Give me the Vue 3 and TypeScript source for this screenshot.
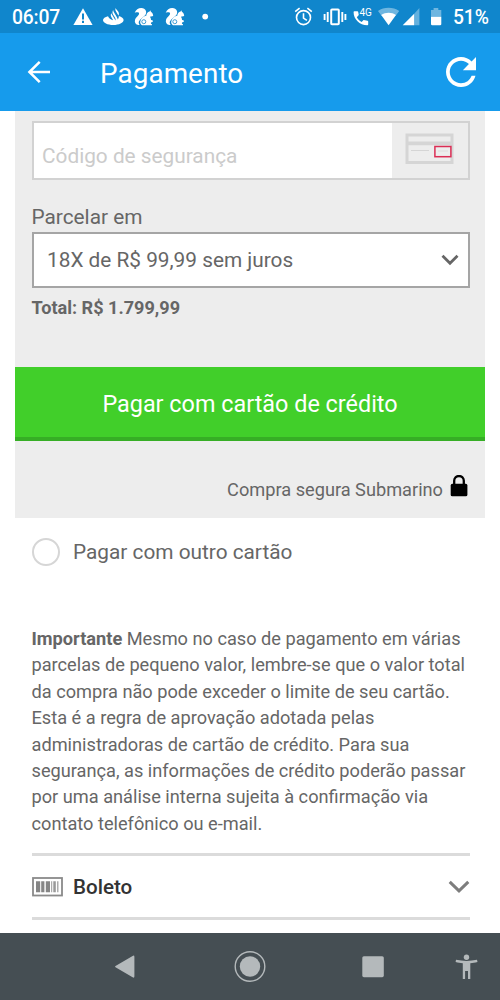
<script setup lang="ts">
import { ref } from 'vue'

const securityCode = ref('')
const installment = '18X de R$ 99,99 sem juros'
const total = 'Total: R$ 1.799,99'
const notice: string[] = [
  'Mesmo no caso de pagamento em várias',
  'parcelas de pequeno valor, lembre-se que o valor total',
  'da compra não pode exceder o limite de seu cartão.',
  'Esta é a regra de aprovação adotada pelas',
  'administradoras de cartão de crédito. Para sua',
  'segurança, as informações de crédito poderão passar',
  'por uma análise interna sujeita à confirmação via',
  'contato telefônico ou e-mail.',
]
</script>

<template>
  <div class="screen">
    <div class="status">
      <span class="clock">06:07</span>
      <svg class="status-icons" width="140" height="33" viewBox="72 0 140 33" fill="#fff">
        <path d="M83 8.2 92.6 25H73.4Z" />
        <path d="M82 13.4h2v6h-2zM82 20.8h2v2.1h-2z" fill="#1086cc" />
        <path d="M108 16.2c-3 .8-5 2.2-5 3.9 0 2.8 4.6 5 10.3 5s10.3-2.2 10.3-5c0-1.8-1.9-3.3-4.8-4.1.1 1.4-.3 2.6-1.1 3.5-.2-1.3-.7-2-1.500-3.4l-2.4-4.1c-.4-.7-.6-1.4-.6-2.1-.9 1.3-.9 3.1-.1 4.500l2 3.4c.5.9.6 1.6.4 2.7l-4.3-7.2c-.6 1.3-.6 2.500.1 3.7l1.800 3.2c-1.900-.4-3.800-1.400-5.100-4z" />
        <path d="M115.7 8c-.5 1.2-.4 2.2.2 3.3l2.6 4.500c.7-1.500.5-2.900-.3-4.200l-1.900-2.300c-.3-.4-.5-.8-.6-1.300z" />
        <g v-for="x in [0, 31]" :key="x" :transform="`translate(${x} 0)`">
          <path d="M134.700 12.700c1.200-3.200 3.700-4.800 6.700-4.700 4.300.2 6 4 3.900 7.100-1.600 2.300-5 3.600-6.300 6.200-.6 1.400-.2 2.600.8 3.800h-1.300c-2.900-.5-4.200-2.700-3.500-5.200.7-2.400 4.100-4.100 4.100-6.300 0-1.400-1.900-1.500-4.400-.9z" />
          <path d="M140.300 21.200c.5-2.800 3.500-4.700 6.100-5.600-.2-2.200 1.200-3.900 3.200-4.200l.7-1.100.6 1.500c1.300.7 2.100 2 2.300 4.200l-3.300.8c.7.9 1.200 1.900 1.100 3.200l1.600.2.200 1.700-1.600.3c0 .7-.1 1.300-.4 1.900h1.100v1.200H142c-1.400-1-2.100-2.500-1.700-4.100z" />
          <circle cx="143.800" cy="21.700" r="2" fill="none" stroke="#1086cc" stroke-width=".8" />
        </g>
        <circle cx="205.2" cy="16.600" r="2.900" />
      </svg>
      <svg class="system-icons" width="154" height="33" viewBox="290 0 154 33" fill="#fff">
        <g fill="none" stroke="#fff" stroke-width="1.6">
          <circle cx="303.5" cy="17.6" r="7" />
          <path d="M303.5 13.3v4.8l3.4 2.2M295.2 11.7l4.4-3.5M311.8 11.7l-4.4-3.5" />
          <rect x="331.2" y="9.5" width="7.6" height="14.8" rx=".8" stroke-width="2" />
          <path d="M327.7 12v10M342.3 12v10M324.6 14v6M345.4 14v6" stroke-width="1.9" />
        </g>
        <path d="M354.4 11.2h3c.5 0 .7.3.8.7l.6 3.2-2 2.2c1.3 2.3 2.5 3.4 4.8 4.6l2-2 3.9.8c.4.1.7.4.7.8v3c0 .5-.3.8-.8.8-8-.2-13.8-6-13.8-13.3 0-.5.3-.8.8-.8z" />
        <path d="M378 11c6-4.2 15-4.2 21.2 0l-3.5 4.7c-4.2-2.5-9.9-2.5-14.2 0z" opacity=".4" />
        <path d="M381.2 14.9c4.5-3 10.3-3 14.8 0l-7.4 10.3z" />
        <path d="M419.4 8v17.2h-5.2V13.7z" opacity=".35" />
        <path d="M414.2 13.7v11.5h-11.5z" />
        <path d="M433.6 8h4.7v2h3v6.8H431V10h2.6z" opacity=".4" />
        <path d="M431 16.8h10.3v7.1q0 1.3-1.3 1.3h-7.7q-1.3 0-1.3-1.3z" />
      </svg>
      <span class="network">4G</span>
      <span class="battery">51%</span>
    </div>

    <header class="appbar">
      <svg class="back" width="24" height="24" viewBox="0 0 24 24" fill="none" stroke="#fff" stroke-width="2.5">
        <path d="M23 12H2.5M12.7 1.8 2.4 12l10.300 10.200" />
      </svg>
      <h1>Pagamento</h1>
      <svg class="reload" width="30" height="30" viewBox="4 4 16 16" fill="#fff">
        <path d="M17.65 6.35C16.2 4.9 14.21 4 12 4c-4.42 0-7.99 3.58-7.99 8s3.57 8 7.99 8c3.73 0 6.84-2.55 7.73-6h-2.08c-.82 2.33-3.04 4-5.65 4-3.31 0-6-2.69-6-6s2.69-6 6-6c1.66 0 3.14.69 4.22 1.78L13 11h7V4z" />
      </svg>
    </header>

    <main class="content">
      <section class="panel">
        <div class="code-field">
          <input v-model="securityCode" type="text" placeholder="Código de segurança" />
          <div class="code-hint">
            <svg width="50" height="32" viewBox="0 0 50 32" fill="none">
              <rect x="2" y="2" width="45" height="27.5" stroke="#d5d5d5" stroke-width="3" />
              <path d="M2 10.300h45" stroke="#d5d5d5" stroke-width="3.8" />
              <path d="M6 17.5h18" stroke="#d5d5d5" />
              <rect x="29.9" y="13.5" width="16" height="10.2" fill="#ededed" stroke="#db2e55" stroke-width="1.5" />
              <path d="M33 18h10" stroke="#ddd" />
            </svg>
          </div>
        </div>
        <div class="label">Parcelar em</div>
        <div class="select">
          <span>{{ installment }}</span>
          <svg width="18" height="12" viewBox="0 0 18 12" fill="none" stroke="#666" stroke-width="2.8">
            <path d="m1.5 1.7 7.5 7.5 7.5-7.5" />
          </svg>
        </div>
        <div class="total">{{ total }}</div>
        <button class="pay" type="button"><span>Pagar com cartão de crédito</span></button>
        <div class="secure">
          <span>Compra segura Submarino</span>
          <svg width="18" height="22" viewBox="0 0 18 22">
            <path d="M4.2 10V5.8a4.8 4.8 0 0 1 9.6 0V10" fill="none" stroke="#000" stroke-width="2.3" />
            <rect x=".7" y="8.8" width="16.7" height="12.5" rx="1.6" />
          </svg>
        </div>
      </section>

      <div class="other">
        <i class="radio"></i>
        <span>Pagar com outro cartão</span>
      </div>

      <p class="notice">
        <span v-for="(line, i) in notice" :key="i" class="line"><b v-if="i === 0">Importante</b>{{ i === 0 ? ' ' : '' }}{{ line }}</span>
      </p>

      <div class="boleto">
        <svg width="31" height="20" viewBox="0 0 31 20">
          <rect x="1" y="1" width="29" height="17.5" fill="none" stroke="#8a8a8a" stroke-width="1.8" />
          <path d="M4 4.300h4.200v11H4zM9.200 4.300h3.200v11H9.200zM13.800 4.300H18v11h-4.200z" fill="#858585" />
          <path d="M19.200 4.300h1v11h-1zM21.300 4.300h2.500v11h-2.500zM25.200 4.300h1.200v11h-1.200z" fill="#999" />
        </svg>
        <span>Boleto</span>
        <svg class="expand" width="22" height="14" viewBox="0 0 22 14" fill="none" stroke="#7d7d7d" stroke-width="3">
          <path d="m1.7 1.8 9.300 9 9.300-9" />
        </svg>
      </div>
    </main>

    <nav class="navbar">
      <svg width="500" height="67" viewBox="0 0 500 67" fill="#b4b9bb">
        <path d="M115.5 33.1 132.6 22.900q1.800-1 1.800 1v19.400q0 2-1.800 1l-17.100-10q-1-.6 0-1.200z" />
        <circle cx="250" cy="33.5" r="14.8" fill="none" stroke="#b4b9bb" stroke-width="1.4" />
        <circle cx="250" cy="33.5" r="10.2" />
        <rect x="362.3" y="23.2" width="21.5" height="21" rx="1.6" />
        <circle cx="466.5" cy="24.2" r="2.7" />
        <path d="M456 26.800c7 1.500 14 1.500 21 0l.5 2.200c-2.600.6-4.500 1-7.200 1.200v15.900h-2.300v-8h-2.900v8h-2.300V30.200c-2.700-.2-4.600-.6-7.200-1.200z" />
      </svg>
    </nav>
  </div>
</template>

<style>
body {
  margin: 0;
  background: #fff;
}
</style>

<style scoped>
* {
  box-sizing: border-box;
}

.screen {
  display: flex;
  flex-direction: column;
  width: 500px;
  height: 1000px;
  overflow: hidden;
  background: #fff;
  color: #666;
  font-family: Roboto, sans-serif;
}

span {
  white-space: nowrap;
}

svg {
  display: block;
  flex: none;
}

.status {
  position: relative;
  display: flex;
  align-items: center;
  height: 33px;
  padding: 2px 11px 0 12px;
  background: #1086cc;
  color: #fff;
  font-size: 19.3px;
  font-weight: 500;
}

.status svg {
  margin-top: -2px;
}

.clock {
  width: 60px;
  letter-spacing: -0.15px;
}

.status .system-icons {
  margin-left: 78px;
}

.network {
  position: absolute;
  left: 359.5px;
  top: 7px;
  font-size: 10px;
  line-height: 12px;
  font-weight: 400;
}

.battery {
  margin-left: auto;
}

.appbar {
  display: flex;
  align-items: center;
  height: 78px;
  padding: 0 24px 0 27px;
  background: #169bec;
  color: #fff;
}

h1 {
  margin: 3px 0 0 49px;
  font-size: 27.8px;
  line-height: 34px;
  font-weight: 400;
  letter-spacing: 0.1px;
}

.reload {
  margin-left: auto;
}

.content {
  height: 822px;
}

.panel {
  height: 407px;
  margin: 0 15px;
  padding-top: 10px;
  background: #ededed;
}

.code-field,
.select {
  display: flex;
  width: 438px;
  margin-left: 17px;
  background: #fff;
}

.code-field {
  height: 59px;
  border: 2px solid #d2d2d2;
}

input {
  width: 358px;
  padding: 10px 0 0 8px;
  border: 0;
  outline: 0;
  background: #fff;
  font: 20.8px Roboto, sans-serif;
}

input::placeholder {
  color: #cbcbcb;
  opacity: 1;
}

.code-hint {
  flex: 1;
  padding: 10px 0 0 13px;
  background: #ededed;
}

.label {
  margin: 24px 0 2px 16.5px;
  font-size: 20.8px;
  line-height: 26px;
}

.select {
  align-items: center;
  justify-content: space-between;
  height: 56px;
  padding: 0 9px 0 13px;
  border: 2px solid #a5a5a5;
  font-size: 20.8px;
}

.total {
  margin: 8px 0 0 16.5px;
  font-size: 18.1px;
  line-height: 24px;
  font-weight: 700;
}

.pay {
  display: block;
  width: 470px;
  height: 74px;
  margin-top: 47px;
  padding: 4px 0 0;
  border: 0;
  border-bottom: 4px solid #36ae25;
  background: #41cf2a;
  color: #fff;
  font: 23.4px Roboto, sans-serif;
}

.secure {
  display: flex;
  justify-content: flex-end;
  gap: 7px;
  margin: 34px 17px 0 0;
  font-size: 18.2px;
  line-height: 30px;
}

.other {
  display: flex;
  align-items: center;
  gap: 13px;
  height: 68px;
  padding-left: 32px;
  font-size: 20.8px;
}

.radio {
  width: 28px;
  height: 28px;
  border: 2px solid #d6d6d6;
  border-radius: 50%;
}

.notice {
  margin: 40px 0 0 31.5px;
  font-size: 18.2px;
  line-height: 26.4px;
}

.line {
  display: block;
}

.boleto {
  display: flex;
  align-items: center;
  width: 438px;
  height: 67px;
  margin: 16px 0 0 32px;
  border: solid #dbdbdb;
  border-width: 3px 0;
  color: #333;
  font-size: 20.6px;
  font-weight: 500;
}

.boleto span {
  margin-left: 10px;
}

.expand {
  margin-left: auto;
}

.navbar {
  height: 67px;
  background: #454e53;
}
</style>
